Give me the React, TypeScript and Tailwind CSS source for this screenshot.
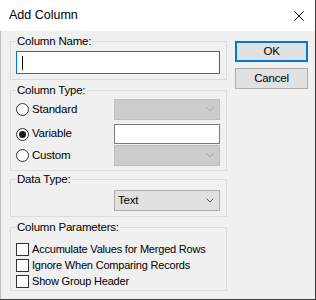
import type { ReactNode } from 'react';

const font = "font-['Liberation_Sans',Arial,sans-serif]";

/** Small chevron used inside the combo boxes */
function Chevron({ color }: { color: string }) {
    return (
        <svg width="8" height="5" viewBox="0 0 8 5" className="shrink-0">
            <polyline points="0.5,0.5 4,4 7.5,0.5" fill="none" stroke={color} strokeWidth="1" />
        </svg>
    );
}

function Combo({ value, disabled }: { value?: string; disabled?: boolean }) {
    return (
        <div
            className={
                disabled
                    ? 'flex h-[21px] w-[106px] items-center justify-end border border-[#bfbfbf] bg-[#cccccc] pr-[5px]'
                    : 'flex h-[21px] w-[106px] items-center justify-between border border-[#adadad] bg-[#e1e1e1] pl-[3px] pr-[5px]'
            }
        >
            {value && <span className="text-[11.5px] leading-none">{value}</span>}
            <Chevron color={disabled ? '#a6a6a6' : '#606060'} />
        </div>
    );
}

function Radio({ label, checked }: { label: string; checked?: boolean }) {
    return (
        <div className="flex w-[98px] items-center gap-[3px]">
            <span className="flex h-[13px] w-[13px] items-center justify-center rounded-full border border-[#333333] bg-white">
                {checked && <span className="h-[7px] w-[7px] rounded-full bg-[#1a1a1a]" />}
            </span>
            <span className="whitespace-nowrap text-[11.5px]">{label}</span>
        </div>
    );
}

function Check({ label }: { label: string }) {
    return (
        <div className="flex h-[16px] items-center gap-[3px]">
            <span className="h-[13px] w-[13px] shrink-0 border border-[#333333] bg-white" />
            <span className="whitespace-nowrap">{label}</span>
        </div>
    );
}

function Group({ title, className, children }: { title: string; className: string; children: ReactNode }) {
    return (
        <fieldset className={`border border-[#dcdcdc] pl-[5px] pr-[6px] ${className}`}>
            <legend className="whitespace-nowrap px-[1px] text-[11.5px] leading-[14px]">{title}</legend>
            {children}
        </fieldset>
    );
}

export default function App() {
    return (
        <div className={`h-[300px] w-[316px] bg-[#3a3a3a] text-[11px] tracking-[-0.2px] text-black ${font}`}>
            <div className="flex h-[299px] w-[315px] flex-col bg-[#f0f0f0]">
                {/* Title bar */}
                <div className="flex h-[31px] items-center justify-between bg-white pl-[9px] pr-[11px]">
                    <span className="text-[12.5px] tracking-normal">Add Column</span>
                    <svg width="10" height="10" viewBox="0 0 10 10">
                        <path d="M0.5 0.5 L9.5 9.5 M9.5 0.5 L0.5 9.5" stroke="#111" strokeWidth="1" />
                    </svg>
                </div>

                {/* Body */}
                <div className="flex flex-1 border-l border-[#bdbdbd] pl-[9px]">
                    <div className="flex w-[217px] flex-col pt-[3px]">
                        <Group title="Column Name:" className="pb-[5px]">
                            <div className="mt-[3px] flex h-[23px] w-[204px] items-center border border-[#0078d7] bg-white pl-[5px]">
                                <span className="h-[14px] w-px bg-black" />
                            </div>
                        </Group>

                        <Group title="Column Type:" className="mt-[3px] pb-[4px]">
                            <div className="mt-[2px] flex h-[21px] items-center">
                                <Radio label="Standard" />
                                <Combo disabled />
                            </div>
                            <div className="mt-[4px] flex h-[20px] items-center">
                                <Radio label="Variable" checked />
                                <div className="h-[20px] w-[106px] border border-[#7a7a7a] bg-white" />
                            </div>
                            <div className="mt-[1px] flex h-[21px] items-center">
                                <Radio label="Custom" />
                                <Combo disabled />
                            </div>
                        </Group>

                        <Group title="Data Type:" className="mt-[1px] pb-[5px]">
                            <div className="mt-[4px] flex justify-end">
                                <Combo value="Text" />
                            </div>
                        </Group>

                        <Group title="Column Parameters:" className="mt-[3px] pb-[1px]">
                            <div className="mt-[7px] flex flex-col">
                                <Check label="Accumulate Values for Merged Rows" />
                                <Check label="Ignore When Comparing Records" />
                                <Check label="Show Group Header" />
                            </div>
                        </Group>
                    </div>

                    {/* Buttons */}
                    <div className="ml-[8px] flex flex-col pt-[10px]">
                        <button className="h-[21px] w-[73px] border-2 border-[#0078d7] bg-[#e1e1e1] text-[11.5px] leading-none">
                            OK
                        </button>
                        <button className="mt-[6px] h-[21px] w-[73px] border border-[#adadad] bg-[#e1e1e1] text-[11.5px] leading-none">
                            Cancel
                        </button>
                    </div>
                </div>
            </div>
        </div>
    );
}
